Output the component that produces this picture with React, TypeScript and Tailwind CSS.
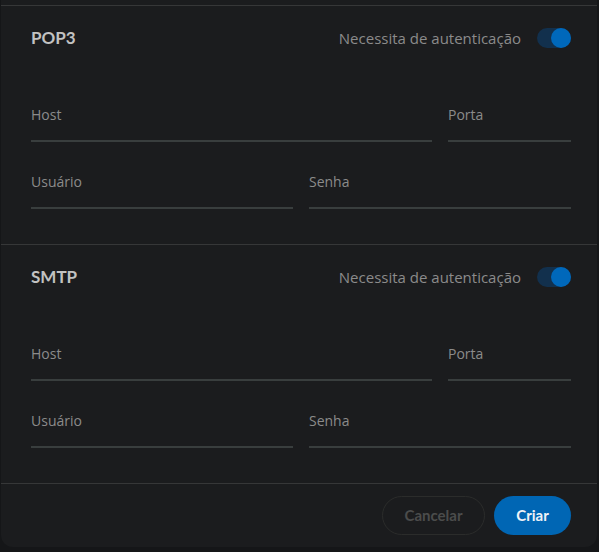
import { useState } from "react";

type Field = { label: string };

function UnderlineField({ label }: Field) {
  return (
    <div className="flex flex-col">
      <span className="h-5 text-[14px] leading-5 text-[#8b8b8b]">{label}</span>
      <div className="mt-[15px] h-[2px] bg-[#393e3e]" />
    </div>
  );
}

function Toggle({ on, onChange }: { on: boolean; onChange: () => void }) {
  return (
    <button
      type="button"
      onClick={onChange}
      className={`relative h-5 w-[34px] rounded-full ${on ? "bg-[#12304d]" : "bg-[#3a3a3a]"}`}
    >
      <span
        className={`absolute top-0 h-5 w-5 rounded-full ${on ? "right-0 bg-[#0068bb]" : "left-0 bg-[#8b8b8b]"}`}
      />
    </button>
  );
}

function ServerSection({ title }: { title: string }) {
  const [auth, setAuth] = useState(true);

  return (
    <section className="border-t border-[#363738] pt-[22px] pb-[35px] pl-[30px] pr-[26px]">
      <div className="flex h-5 items-center justify-between">
        <h2 className="font-['Lato'] text-[17px] font-bold text-[#c2c2c2]">{title}</h2>
        <label className="flex items-center gap-4">
          <span className="text-[15px] text-[#8b8b8b]">Necessita de autenticação</span>
          <Toggle on={auth} onChange={() => setAuth(!auth)} />
        </label>
      </div>

      <div className="mt-[57px] grid grid-cols-[1fr_123px] gap-4">
        <UnderlineField label="Host" />
        <UnderlineField label="Porta" />
      </div>

      <div className="mt-[30px] grid grid-cols-2 gap-4">
        <UnderlineField label="Usuário" />
        <UnderlineField label="Senha" />
      </div>
    </section>
  );
}

export default function App() {
  return (
    <div className="h-[552px] w-[599px] overflow-hidden bg-[#151618] font-['Open_Sans',sans-serif]">
      <div className="ml-[1px] w-[596px] rounded-b-xl bg-[#1b1c1e]">
        <div className="h-[5px]" />
        <ServerSection title="POP3" />
        <ServerSection title="SMTP" />

        <div className="flex justify-end gap-[9px] border-t border-[#363738] pt-3 pb-3 pr-[26px] font-['Lato']">
          <button
            type="button"
            className="h-[39px] w-[103px] rounded-full border border-[#2b2c2b] text-[15px] font-bold text-[#4b4c4c]"
          >
            Cancelar
          </button>
          <button
            type="button"
            className="h-[39px] w-[77px] rounded-full bg-[#0066b4] text-[15px] font-bold text-[#eef2f7]"
          >
            Criar
          </button>
        </div>
      </div>
    </div>
  );
}
